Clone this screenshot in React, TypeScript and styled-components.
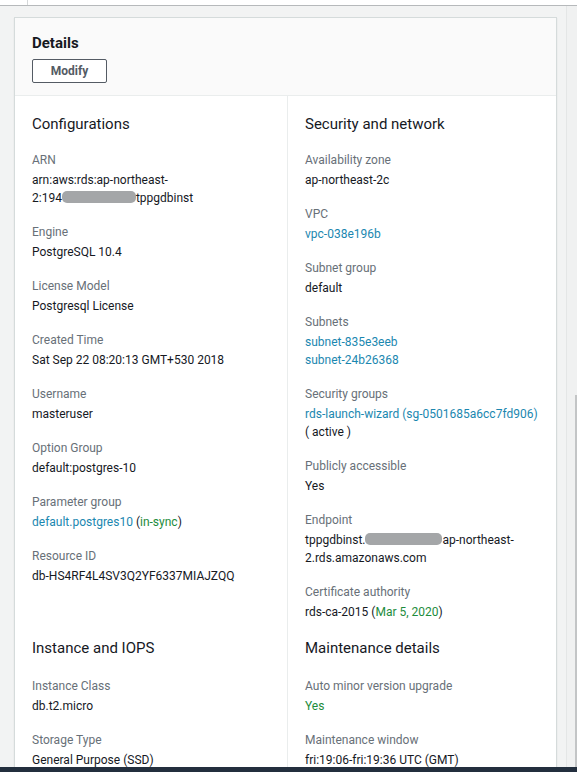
import React from "react";
import styled, { createGlobalStyle } from "styled-components";

const GlobalStyle = createGlobalStyle`
  html, body {
    margin: 0;
    padding: 0;
    height: 100%;
    overflow: hidden;
    background: #f2f3f3;
    font-family: Roboto, "Liberation Sans", Arial, sans-serif;
    color: #16191f;
  }
`;

const Redacted: React.FC<{ w: number }> = ({ w }) => (
  <Blur style={{ width: w }} />
);

const App: React.FC = () => {
  return (
    <Page>
      <GlobalStyle />
      <TopStrip>
        <TopDivider />
      </TopStrip>
      <Workspace>
        <Main>
          <Card>
            <Header>
              <Title>Details</Title>
              <Button>Modify</Button>
            </Header>
            <Body>
              <Section $left $first>
                <Heading>Configurations</Heading>
                <Field>
                  <Label>ARN</Label>
                  <Value>
                    arn:aws:rds:ap-northeast-
                    <br />
                    2:194
                    <Redacted w={74} />
                    tppgdbinst
                  </Value>
                </Field>
                <Field>
                  <Label>Engine</Label>
                  <Value>PostgreSQL 10.4</Value>
                </Field>
                <Field>
                  <Label>License Model</Label>
                  <Value>Postgresql License</Value>
                </Field>
                <Field>
                  <Label>Created Time</Label>
                  <Value>Sat Sep 22 08:20:13 GMT+530 2018</Value>
                </Field>
                <Field>
                  <Label>Username</Label>
                  <Value>masteruser</Value>
                </Field>
                <Field>
                  <Label>Option Group</Label>
                  <Value>default:postgres-10</Value>
                </Field>
                <Field>
                  <Label>Parameter group</Label>
                  <Value>
                    <Link>default.postgres10</Link> (<Ok>in-sync</Ok>)
                  </Value>
                </Field>
                <Field>
                  <Label>Resource ID</Label>
                  <Value>db-HS4RF4L4SV3Q2YF6337MIAJZQQ</Value>
                </Field>
              </Section>
              <Section $first>
                <Heading>Security and network</Heading>
                <Field>
                  <Label>Availability zone</Label>
                  <Value>ap-northeast-2c</Value>
                </Field>
                <Field>
                  <Label>VPC</Label>
                  <Value>
                    <Link>vpc-038e196b</Link>
                  </Value>
                </Field>
                <Field>
                  <Label>Subnet group</Label>
                  <Value>default</Value>
                </Field>
                <Field>
                  <Label>Subnets</Label>
                  <Value>
                    <Link>subnet-835e3eeb</Link>
                    <br />
                    <Link>subnet-24b26368</Link>
                  </Value>
                </Field>
                <Field>
                  <Label>Security groups</Label>
                  <Value>
                    <Link>rds-launch-wizard (sg-0501685a6cc7fd906)</Link>
                    <br />( active )
                  </Value>
                </Field>
                <Field>
                  <Label>Publicly accessible</Label>
                  <Value>Yes</Value>
                </Field>
                <Field>
                  <Label>Endpoint</Label>
                  <Value>
                    tppgdbinst.
                    <Redacted w={77} />
                    ap-northeast-
                    <br />
                    2.rds.amazonaws.com
                  </Value>
                </Field>
                <Field>
                  <Label>Certificate authority</Label>
                  <Value>
                    rds-ca-2015 (<Ok>Mar 5, 2020</Ok>)
                  </Value>
                </Field>
              </Section>
              <Section $left>
                <Heading $gap={19}>Instance and IOPS</Heading>
                <Field>
                  <Label>Instance Class</Label>
                  <Value>db.t2.micro</Value>
                </Field>
                <Field>
                  <Label>Storage Type</Label>
                  <Value>General Purpose (SSD)</Value>
                </Field>
              </Section>
              <Section>
                <Heading $gap={19}>Maintenance details</Heading>
                <Field>
                  <Label>Auto minor version upgrade</Label>
                  <Value>
                    <Ok>Yes</Ok>
                  </Value>
                </Field>
                <Field>
                  <Label>Maintenance window</Label>
                  <Value>fri:19:06-fri:19:36 UTC (GMT)</Value>
                </Field>
              </Section>
            </Body>
          </Card>
        </Main>
        <ScrollTrack>
          <Thumb />
        </ScrollTrack>
      </Workspace>
      <BottomBar />
    </Page>
  );
};

export default App;

const Page = styled.div`
  height: 100vh;
  display: flex;
  flex-direction: column;
  overflow: hidden;
`;

const TopStrip = styled.div`
  height: 5px;
  flex-shrink: 0;
  background: #ffffff;
  border-bottom: 1px solid #b6b9bb;
  padding-left: 27px;
`;

const TopDivider = styled.div`
  width: 1px;
  height: 100%;
  background: #d5d8d9;
`;

const Workspace = styled.div`
  flex: 1;
  display: flex;
  min-height: 0;
`;

const Main = styled.div`
  flex: 1;
  padding: 11px 9px 0 14px;
`;

const ScrollTrack = styled.div`
  width: 10px;
  flex-shrink: 0;
  background: #f0f1f1;
  border-left: 1px solid #e4e6e6;
  display: flex;
  justify-content: flex-end;
  padding-top: 389px;
`;

const Thumb = styled.div`
  width: 2px;
  height: 100%;
  background: #c3c5c6;
`;

const Card = styled.div`
  background: #ffffff;
  border: 1px solid #d5dbdb;
  box-shadow: 0 1px 1px rgba(0, 28, 36, 0.12);
`;

const Header = styled.div`
  background: #fafafa;
  padding: 15px 17px 12px;
  border-bottom: 1px solid #eaeded;
`;

const Title = styled.h2`
  margin: 0;
  font-size: 15px;
  line-height: 20px;
  font-weight: 700;
  color: #16191f;
`;

const Button = styled.button`
  margin-top: 6px;
  width: 75px;
  height: 24px;
  padding: 0;
  background: #ffffff;
  border: 1px solid #545b64;
  border-radius: 2px;
  font-family: inherit;
  font-size: 12px;
  font-weight: 700;
  color: #545b64;
`;

const Body = styled.div`
  display: grid;
  grid-template-columns: 273px 1fr;
`;

const Section = styled.div<{ $left?: boolean; $first?: boolean }>`
  padding: ${(p) => (p.$first ? "18px" : "1px")} 17px 0;
  border-right: ${(p) => (p.$left ? "1px solid #eaeded" : "none")};
  min-width: 0;
`;

const Heading = styled.h3<{ $gap?: number }>`
  margin: 0 0 ${(p) => p.$gap ?? 17}px;
  font-size: 15px;
  line-height: 20px;
  font-weight: 400;
  color: #16191f;
`;

const Field = styled.div`
  margin-bottom: 16px;
`;

const Label = styled.div`
  font-size: 12px;
  line-height: 18px;
  color: #687078;
`;

const Value = styled.div`
  margin-top: 2px;
  font-size: 12px;
  line-height: 18px;
  color: #16191f;
  white-space: nowrap;
`;

const Link = styled.span`
  color: #1b87b0;
`;

const Ok = styled.span`
  color: #1d8c3c;
`;

const Blur = styled.span`
  display: inline-block;
  height: 12px;
  vertical-align: -1px;
  background: #a4a6a8;
  border-radius: 5px;
`;

const BottomBar = styled.div`
  position: fixed;
  left: 0;
  right: 0;
  bottom: 0;
  height: 5px;
  background: #232f3e;
`;
